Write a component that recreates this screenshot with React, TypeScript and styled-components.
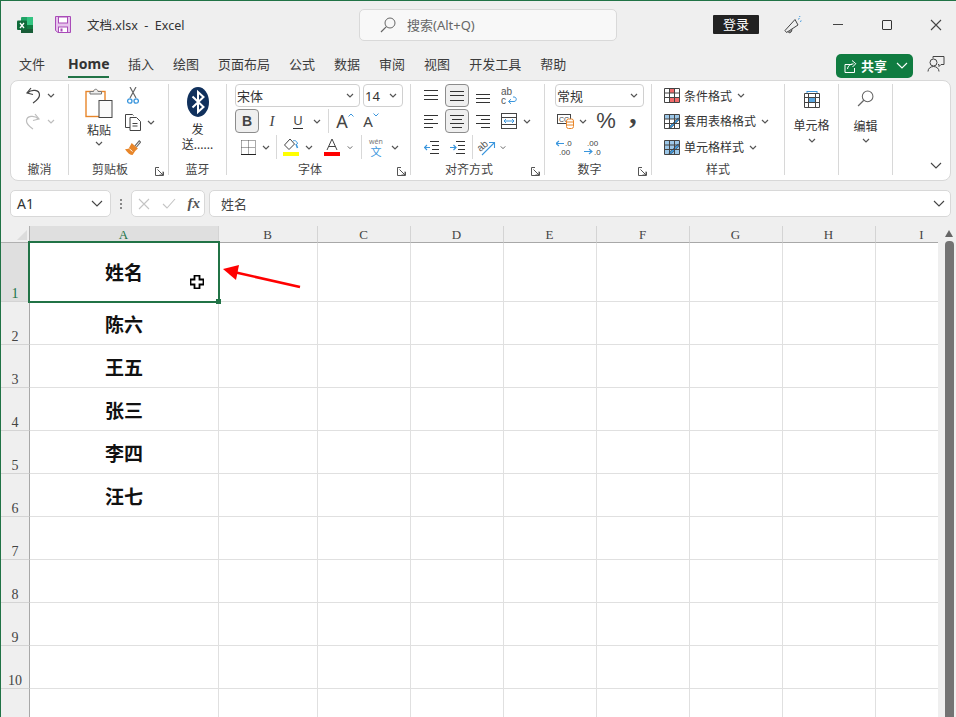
import React from 'react'
import styled, { createGlobalStyle } from 'styled-components'

const UI_FONT = `"Noto Sans", "Noto Sans CJK SC", sans-serif`
const GREEN = '#217346'
const BLUE = '#3a96dd'
const ORANGE = '#e8862a'
const INK = '#444'

const GlobalStyle = createGlobalStyle`
  html, body { margin: 0; padding: 0; background: #efefef; }
  #root { width: 956px; height: 717px; overflow: hidden; }
  * { box-sizing: border-box; }
`

// small drawings
const Chevron = ({ color = '#555' }: { color?: string }) => (
  <svg width="8" height="5" viewBox="0 0 8 5" fill="none" stroke={color} strokeWidth="1.2">
    <path d="M1 1l3 3 3-3" />
  </svg>
)

const WideChevron = ({ color = '#444' }: { color?: string }) => (
  <svg width="12" height="7" viewBox="0 0 12 7" fill="none" stroke={color} strokeWidth="1.1">
    <path d="M1 1l5 5 5-5" />
  </svg>
)

const Stroke = ({ w, h, children, color = INK }: { w: number; h: number; children: React.ReactNode; color?: string }) => (
  <svg width={w} height={h} viewBox={`0 0 ${w} ${h}`} fill="none" stroke={color} strokeWidth="1">
    {children}
  </svg>
)

const ExcelLogo = () => (
  <svg width="16" height="16" viewBox="0 0 16 16">
    <rect x="4" y="0" width="12" height="16" rx="1" fill="#21a366" />
    <rect x="10" y="0" width="6" height="8" fill="#33c481" />
    <rect x="4" y="8" width="12" height="4" fill="#107c41" />
    <rect x="4" y="12" width="12" height="4" fill="#185c37" />
    <rect x="0" y="3.5" width="10" height="9.5" rx="1" fill="#0f6b3a" />
    <path d="M3 6l4 5M7 6l-4 5" stroke="#fff" strokeWidth="1.3" />
  </svg>
)

const SaveIcon = () => (
  <svg width="16" height="17" viewBox="0 0 16 17">
    <path d="M.5.5h15v16H3l-2.5-2z" fill="#e6c3ec" stroke="#a94bb8" />
    <rect x="3.5" y="1" width="9" height="6" fill="#fff" stroke="#a94bb8" />
    <rect x="3.5" y="11" width="9" height="5.5" fill="#fff" stroke="#a94bb8" />
    <rect x="5.5" y="12.5" width="2" height="3" fill="#a94bb8" />
  </svg>
)

const SearchGlass = ({ size = 16, color = '#666' }: { size?: number; color?: string }) => (
  <svg width={size} height={size} viewBox="0 0 16 16" fill="none" stroke={color} strokeWidth="1">
    <circle cx="10" cy="6" r="5" />
    <path d="M6.4 9.6L1 15" strokeWidth="1.2" />
  </svg>
)

const Megaphone = () => (
  <svg width="18" height="18" viewBox="0 0 18 18" fill="none" stroke={INK}>
    <path d="M11 3.5l3 5.5-11.5 7.5-1.5-2z" />
    <path d="M4 15.5c.5 1.6 3 1.8 3.6-.5l.4-1.8" fill="#888" />
    <path d="M14.5 3.5l.8-1.5M16 5.5l1.5-.7M15.5 1l.5-1" stroke={BLUE} />
  </svg>
)

const ShareIcon = () => (
  <svg width="13" height="14" viewBox="0 0 13 14" fill="none" stroke="#fff">
    <path d="M8 5.5H1v8h9.5V9" />
    <path d="M3.5 10c.3-3 2.5-5 6-5.2M8 1.5l3.8 3.2L8.5 8" />
  </svg>
)

const CommentsIcon = () => (
  <svg width="18" height="18" viewBox="0 0 18 18" fill="none" stroke={INK}>
    <path d="M6 3.5V1.5h11v8h-3l-2 2v-2h-1" />
    <circle cx="6.5" cy="7.5" r="3.5" fill="#efefef" />
    <path d="M1 16.5c0-3 2.5-5 5.5-5s5.5 2 5.5 5" />
  </svg>
)

const CloseX = ({ color = '#444' }: { color?: string }) => (
  <svg width="12" height="12" viewBox="0 0 12 12" stroke={color} strokeWidth="1.1">
    <path d="M1 1l10 10M11 1L1 11" />
  </svg>
)

const Undo = ({ color = '#444', flip = false }: { color?: string; flip?: boolean }) => (
  <svg width="16" height="17" viewBox="0 0 16 17" fill="none" stroke={color} strokeWidth="1.2">
    <g transform={flip ? 'translate(16 0) scale(-1 1)' : undefined}>
      <path d="M6 1L2 6l6 1.5" />
      <path d="M2.5 6C6.500 2 14.500 2.500 14.500 8c0 3.500-3 5.500-6.500 8" />
    </g>
  </svg>
)

const PasteIcon = () => (
  <svg width="28" height="30" viewBox="0 0 28 30" fill="none">
    <rect x="1" y="3.500" width="19" height="25" fill="#fff" stroke={ORANGE} strokeWidth="1.4" />
    <path d="M5 6V3.500h3.500C9 .5 12.500.5 13 3.500h3.500V6z" fill="#eee" stroke="#777" />
    <rect x="14" y="12.500" width="13" height="17" fill="#fafafa" stroke="#444" />
  </svg>
)

const Scissors = () => (
  <svg width="12" height="18" viewBox="0 0 12 18" fill="none">
    <path d="M3 11L9 0M9 11L3 0" stroke="#666" strokeWidth="1.2" />
    <circle cx="2.800" cy="14" r="2.200" stroke={BLUE} strokeWidth="1.3" />
    <circle cx="9.200" cy="14" r="2.200" stroke={BLUE} strokeWidth="1.3" />
  </svg>
)

const CopyIcon = () => (
  <svg width="16" height="17" viewBox="0 0 16 17" fill="none" stroke="#444">
    <path d="M5 13.500H.5V.5h7l1 1" />
    <path d="M5 3.500h6.500l4 4v9H5z" fill="#fff" />
    <path d="M7.500 9.500h5M7.500 12h5" />
  </svg>
)

const Painter = () => (
  <svg width="18" height="17" viewBox="0 0 18 17" fill="none">
    <path d="M11 7l5-6 1.500 1.500-5 6" stroke="#666" strokeWidth="1.2" />
    <path d="M7.500 3.500l7 6-3 3-3 4.500C6 17 3 15 0 10.500l4-.5z" fill={ORANGE} />
    <path d="M5 10l3.500 3" stroke="#fff" />
  </svg>
)

const Bluetooth = () => (
  <svg width="22" height="30" viewBox="0 0 22 30">
    <ellipse cx="11" cy="15" rx="11" ry="15" fill="#10305c" />
    <path d="M5.500 9.500l11 10.500-5.500 5V5l5.500 5-11 10.500" fill="none" stroke="#fff" strokeWidth="2" />
  </svg>
)

const Launcher = () => (
  <svg width="9" height="9" viewBox="0 0 9 9" fill="none" stroke="#555">
    <path d="M4 .5H.5v8h8V5" />
    <path d="M2.500 2.500L8 8M8 4.500V8H4.500" />
  </svg>
)

const BorderIcon = () => (
  <svg width="15" height="15" viewBox="0 0 15 15" fill="none" stroke="#555" strokeDasharray="1 1">
    <path d="M.5.5h14M.5 7.500h14M.5.5v14M7.500.5v14M14.500.5v14" />
    <path d="M0 14.500h15" strokeDasharray="none" stroke="#222" />
  </svg>
)

const FillIcon = () => (
  <svg width="16" height="19" viewBox="0 0 16 19" fill="none">
    <path d="M7 1L1.500 7 6 11.500 11.500 6z" stroke="#444" />
    <path d="M13 6l1.500 4" stroke={BLUE} strokeWidth="1.6" />
    <path d="M10 3c2-1 4 0 4.500 3" stroke={BLUE} />
    <rect x="0" y="14" width="16" height="4" fill="#ffff00" />
  </svg>
)

const FontColor = () => (
  <svg width="16" height="19" viewBox="0 0 16 19" fill="none">
    <path d="M3 12L8 1l5 11M4.800 8.500h6.400" stroke="#444" />
    <rect x="0" y="14" width="16" height="4" fill="#f00" />
  </svg>
)

const Lines = ({ rows }: { rows: [number, number, number][] }) => (
  <Stroke w={16} h={20} color="#333">
    {rows.map(([x1, x2, y]) => (
      <path key={`${x1}-${y}`} d={`M${x1} ${y}.5H${x2}`} />
    ))}
  </Stroke>
)

const WrapIcon = () => (
  <svg width="16" height="18" viewBox="0 0 16 18" fill="none">
    <text fontSize="10" fontFamily="Liberation Sans" fill="#555">
      <tspan x="0" y="8">ab</tspan>
      <tspan x="0" y="17">c</tspan>
    </text>
    <path d="M8 14.500h5c3 0 3-4.500 0-4.500h-1M10 12.200l-2.500 2.300 2.500 2.300" stroke={BLUE} />
  </svg>
)

const MergeIcon = () => (
  <svg width="16" height="16" viewBox="0 0 16 16" fill="none">
    <rect x=".5" y=".5" width="15" height="15" stroke="#444" />
    <path d="M.5 4.500h15M.5 11.500h15" stroke="#444" />
    <rect x="1" y="5" width="14" height="6" fill="#fff" />
    <path d="M3 8h10M5 6L3 8l2 2M11 6l2 2-2 2" stroke={BLUE} />
  </svg>
)

const IndentIcon = ({ out }: { out?: boolean }) => (
  <svg width="15" height="13" viewBox="0 0 15 13" fill="none">
    <path d="M6 .5h9M8 4.500h7M8 8.500h7M6 12.500h9" stroke="#333" />
    <path d={out ? 'M0 6.500h6M3 4L.5 6.500 3 9' : 'M0 6.500h6M3.500 4L6 6.500 3.500 9'} stroke={BLUE} strokeWidth="1.2" />
  </svg>
)

const OrientIcon = () => (
  <svg width="18" height="18" viewBox="0 0 18 18" fill="none" overflow="visible">
    <text x="0" y="12" fontSize="10" fontFamily="Liberation Sans" fill="#555" transform="rotate(-40 4 10)">ab</text>
    <path d="M4 17L16 5M11 4.500h5.500V10" stroke={BLUE} strokeWidth="1.1" />
  </svg>
)

const AccountingIcon = () => (
  <svg width="17" height="16" viewBox="0 0 17 16" fill="none">
    <rect x=".5" y="1.500" width="13" height="9" stroke="#444" />
    <text x="2" y="9" fontSize="7" fontFamily="Liberation Sans" fill="#444">CC</text>
    <rect x="9.500" y="6" width="7" height="9.500" rx="2" fill="#fff" stroke={ORANGE} />
    <path d="M9.500 9h7M9.500 12h7" stroke={ORANGE} />
  </svg>
)

const DecimalIcon = ({ more }: { more?: boolean }) => (
  <svg width="18" height="17" viewBox="0 0 18 17" fill="none">
    <path d={more ? 'M0 12.500h8M5 10l3 2.500L5 15' : 'M0 4.500h8M3 2L0 4.500 3 7'} stroke={BLUE} strokeWidth="1.1" />
    <text fontSize="8" fontFamily="Liberation Sans" fill="#444">
      <tspan x={more ? 3 : 9} y="7">{more ? '.00' : '.0'}</tspan>
      <tspan x={more ? 10 : 3} y="16">{more ? '.0' : '.00'}</tspan>
    </text>
  </svg>
)

const TableBase = ({ children }: { children?: React.ReactNode }) => (
  <svg width="16" height="15" viewBox="0 0 16 15" fill="none">
    {children}
    <path d="M.5.5h15v14H.5zM.5 5h15M.5 9.500h15M5.500.5v14M10.500.5v14" stroke="#444" />
  </svg>
)

const Brush = () => <path d="M16 5L8 13c-1 1-2 1.500-3.500 1.500L6 12l8-8z" fill={BLUE} stroke="#444" strokeWidth=".6" />

const CellsIcon = () => (
  <svg width="16" height="17" viewBox="0 0 16 17" fill="none">
    <path d="M3 .5h10M3 0v2M13 0v2" stroke={BLUE} />
    <rect x="4" y="6" width="8" height="5.500" fill="#5ba7e0" />
    <path d="M.5 2.500h15v14H.5zM.5 6.500h15M.5 11.500h15M4.500 2.500v14M11.500 2.500v14" stroke="#444" />
  </svg>
)

const PointerCross = () => (
  <svg width="14" height="14" viewBox="0 0 14 14">
    <path d="M4.500.5h5v4h4v5h-4v4h-5v-4h-4v-5h4z" fill="#fff" stroke="#000" strokeWidth="1.8" />
  </svg>
)

const RedArrow = () => (
  <svg width="84" height="30" viewBox="0 0 84 30">
    <path d="M78 22L14 7.500" stroke="#f00" strokeWidth="2.600" />
    <path d="M1 4L17 0l-3 15z" fill="#f00" />
  </svg>
)

// shell
const Window = styled.div`
  position: relative;
  width: 956px;
  height: 717px;
  overflow: hidden;
  background: #efefef;
  border-top: 1px solid ${GREEN};
  border-left: 1px solid ${GREEN};
  font-family: ${UI_FONT};
  color: #333;
`

const TitleBar = styled.header`
  display: flex;
  align-items: center;
  height: 47px;
`

const TitleLeft = styled.div`
  display: flex;
  align-items: center;
  width: 358px;
  padding-left: 16px;
  gap: 22px;
`

const DocName = styled.span`
  font-size: 12.500px;
  margin-left: -6px;
  white-space: pre;
`

const SearchBox = styled.div`
  display: flex;
  align-items: center;
  width: 258px;
  height: 32px;
  padding-left: 20px;
  gap: 11px;
  background: #f8f8f8;
  border: 1px solid #d9d9d9;
  border-radius: 5px;
  font-size: 13px;
  color: #666;
`

const LoginButton = styled.div`
  width: 46px;
  height: 19px;
  margin-left: 96px;
  background: #222;
  color: #fff;
  font-size: 13px;
  line-height: 19px;
  text-align: center;
  border-radius: 1px;
`

const TitleAction = styled.div<{ $w: number }>`
  display: flex;
  align-items: center;
  justify-content: center;
  width: ${p => p.$w}px;
  height: 30px;
`

const MinLine = styled.span`
  width: 10px;
  height: 1px;
  background: #444;
`

const MaxBox = styled.span`
  width: 10px;
  height: 10px;
  border: 1px solid #333;
  border-radius: 1px;
`

const TabBar = styled.nav`
  display: flex;
  align-items: center;
  height: 32px;
  padding-left: 18px;
  gap: 19px;
`

const Tab = styled.span<{ $active?: boolean }>`
  position: relative;
  font-size: ${p => (p.$active ? '14px' : '13px')};
  font-weight: ${p => (p.$active ? 700 : 400)};
  margin-left: ${p => (p.$active ? '4px' : '0')};
  line-height: 22px;
  width: ${p => (p.$active ? '41px' : 'auto')};
  text-align: center;
  color: ${p => (p.$active ? '#333' : '#3c3c3c')};
  border-bottom: 2px solid ${p => (p.$active ? GREEN : 'transparent')};
  padding-bottom: 1px;
  margin-top: 3px;
`

const TabSpacer = styled.div`
  flex: 1;
`

const ShareButton = styled.div`
  display: flex;
  align-items: center;
  width: 77px;
  height: 24px;
  margin-top: 3px;
  margin-right: 43px;
  padding: 0 5px 0 8px;
  gap: 4px;
  background: #107c41;
  border-radius: 5px;
  color: #fff;
  font-size: 13px;
  font-weight: 700;

  svg:last-child {
    margin-left: auto;
  }
`

const TabComments = styled.div`
  position: absolute;
  top: 54px;
  left: 926px;
`

// ribbon
const Ribbon = styled.section`
  display: flex;
  width: 941px;
  height: 101px;
  margin-left: 9px;
  padding-top: 3px;
  background: #fff;
  border: 1px solid #d8d8d8;
  border-radius: 8px;
`

const Group = styled.div<{ $w: number }>`
  display: flex;
  flex-direction: column;
  flex: none;
  width: ${p => p.$w}px;
  height: 91px;
  border-right: 1px solid #d8d8d8;
`

const GroupBody = styled.div<{ $pad?: number }>`
  flex: 1;
  display: flex;
  flex-direction: column;
  gap: 2px;
  padding-left: ${p => p.$pad ?? 0}px;
`

const GroupFoot = styled.div`
  display: flex;
  align-items: flex-start;
  height: 14px;
  padding-top: 2px;
`

const GroupLabel = styled.span`
  flex: 1;
  font-size: 12px;
  line-height: 14px;
  text-align: center;
  color: #444;
`

const LauncherSlot = styled.span`
  display: flex;
  justify-content: center;
  width: 17px;
  margin-top: 4px;
`

const Row = styled.div<{ $first?: boolean; $gap?: number }>`
  display: flex;
  align-items: center;
  height: ${p => (p.$first ? 23 : 24)}px;
  gap: ${p => p.$gap ?? 0}px;
`

const Slot = styled.div<{ $w: number; $on?: boolean }>`
  display: flex;
  align-items: center;
  justify-content: center;
  flex: none;
  width: ${p => p.$w}px;
  height: ${p => (p.$on ? '100%' : 'auto')};
  background: ${p => (p.$on ? '#efefef' : 'transparent')};
  border: ${p => (p.$on ? '1px solid #8c8c8c' : '0')};
  border-radius: 4px;
`

const RowSep = styled.i<{ $w: number }>`
  display: block;
  flex: none;
  width: ${p => p.$w}px;
  height: 24px;
  background: linear-gradient(#d8d8d8, #d8d8d8) center / 1px 100% no-repeat;
`

const Combo = styled.div<{ $w: number; $ml?: number }>`
  display: flex;
  align-items: center;
  justify-content: space-between;
  flex: none;
  width: ${p => p.$w}px;
  height: 23px;
  margin-left: ${p => p.$ml ?? 0}px;
  padding: 0 5px 0 1px;
  border: 1px solid #d0d0d0;
  border-radius: 4px;
  font-size: 13px;
  color: #333;
`

const BoldB = styled.span`
  font-family: "Liberation Sans", sans-serif;
  font-size: 14px;
  font-weight: 700;
  color: #444;
`

const ItalicI = styled.span`
  font-family: "Liberation Serif", serif;
  font-size: 15px;
  font-style: italic;
  color: #444;
`

const UnderU = styled.span`
  font-size: 13px;
  line-height: 15px;
  border-bottom: 1px solid #333;
  color: #444;
`

const GrowA = styled.span<{ $size: number }>`
  position: relative;
  font-size: ${p => p.$size}px;
  line-height: 18px;
  color: #444;

  svg {
    position: absolute;
    top: 1px;
    left: 100%;
  }
`

const Phonetic = styled.ruby`
  font-size: 11px;
  line-height: 1;
  color: ${BLUE};

  rt {
    font-size: 7px;
    line-height: 7px;
    color: #777;
  }
`

const Percent = styled.span`
  font-family: "Liberation Sans", sans-serif;
  font-size: 22px;
  color: #444;
`

const Comma = styled.span`
  font-family: "Liberation Serif", serif;
  font-size: 30px;
  font-weight: 700;
  line-height: 8px;
  height: 24px;
  color: #444;
`

const ClipColumns = styled.div`
  display: flex;
  padding-left: 4px;
`

const BigButton = styled.div<{ $w?: number; $top?: number }>`
  display: flex;
  flex-direction: column;
  align-items: center;
  flex: none;
  width: ${p => (p.$w ? `${p.$w}px` : '100%')};
  padding-top: ${p => p.$top ?? 4}px;
  font-size: 12px;
  line-height: 15px;
  color: #333;
`

const BigText = styled.span<{ $mt?: number }>`
  margin-top: ${p => p.$mt ?? 4}px;
  text-align: center;
`

const BigChevron = styled.span<{ $mt: number }>`
  display: flex;
  margin-top: ${p => p.$mt}px;
`

const ClipTools = styled.div`
  display: flex;
  flex-direction: column;
  gap: 5px;
  padding-top: 3px;
`

const StyleRow = styled(Row)`
  gap: 2px;
`

const StyleText = styled.span`
  font-size: 12px;
  color: #333;
  margin-right: 3px;
`

const CollapseCell = styled.div`
  display: flex;
  flex: 1;
  align-items: flex-end;
  justify-content: flex-end;
  height: 91px;
  padding: 0 8px 6px 0;
`

// formula bar
const FormulaBar = styled.div`
  display: flex;
  align-items: stretch;
  height: 27px;
  margin: 9px 5px 9px 9px;
`

const inputBox = `
  display: flex;
  align-items: center;
  background: #fff;
  border: 1px solid #d8d8d8;
  border-radius: 5px;
`

const NameBox = styled.div`
  ${inputBox}
  justify-content: space-between;
  width: 101px;
  padding: 0 7px 0 6px;
  font-size: 14px;
`

const GripDots = styled.div`
  display: flex;
  flex-direction: column;
  justify-content: center;
  gap: 2px;
  width: 20px;
  align-items: center;
`

const GripDot = styled.i`
  width: 2px;
  height: 2px;
  background: #888;
`

const FxBox = styled.div`
  ${inputBox}
  justify-content: space-between;
  width: 74px;
  padding: 0 4px 0 6px;
`

const FxText = styled.span`
  font-family: "Liberation Serif", serif;
  font-style: italic;
  font-weight: 700;
  font-size: 15px;
  color: #555;
`

const FormulaInput = styled.div`
  ${inputBox}
  justify-content: space-between;
  flex: 1;
  margin-left: 4px;
  padding: 0 5px 0 11px;
  font-size: 13px;
  color: #444;
`

// sheet
const Sheet = styled.div`
  position: relative;
  display: flex;
`

const SheetGrid = styled.div`
  display: grid;
  grid-template-columns: 29px 189px 99px repeat(7, 93px);
  grid-template-rows: 17px 59px repeat(11, 43px);
  width: 937px;
  overflow: hidden;
`

const Corner = styled.div`
  position: relative;
  border-right: 1px solid #b0b0b0;
  border-bottom: 1px solid #b0b0b0;

  &::after {
    content: '';
    position: absolute;
    right: 2px;
    bottom: 2px;
    border-style: solid;
    border-width: 0 0 10px 10px;
    border-color: transparent transparent #dcdcdc transparent;
  }
`

const ColHead = styled.div<{ $on?: boolean }>`
  font-family: "Liberation Serif", serif;
  font-size: 13px;
  line-height: 18px;
  text-align: center;
  padding-right: 1px;
  color: ${p => (p.$on ? GREEN : '#444')};
  background: ${p => (p.$on ? '#dfdfdf' : '#efefef')};
  border-right: 1px solid #d4d4d4;
  border-bottom: 1px solid #a8a8a8;
`

const RowHead = styled.div<{ $on?: boolean }>`
  display: flex;
  align-items: flex-end;
  justify-content: center;
  font-family: "Liberation Serif", serif;
  font-size: 14px;
  line-height: 14px;
  color: ${p => (p.$on ? GREEN : '#444')};
  background: ${p => (p.$on ? '#dfdfdf' : '#efefef')};
  border-right: 1px solid #a8a8a8;
  border-bottom: 1px solid #d4d4d4;
`

const Cell = styled.div<{ $on?: boolean }>`
  position: relative;
  z-index: ${p => (p.$on ? 2 : 'auto')};
  display: flex;
  align-items: center;
  justify-content: center;
  padding-top: ${p => (p.$on ? '0' : '1px')};
  background: #fff;
  border-right: 1px solid #e0e0e0;
  border-bottom: 1px solid #e0e0e0;
  font-size: 19px;
  font-weight: 700;
  color: #111;
`

const Selection = styled.div`
  position: absolute;
  top: -2px;
  left: -2px;
  right: -2px;
  bottom: -2px;
  border: 2px solid ${GREEN};
  pointer-events: none;
`

const FillHandle = styled.i`
  position: absolute;
  right: -3px;
  bottom: -3px;
  width: 5px;
  height: 5px;
  background: ${GREEN};
`

const CellCursor = styled.div`
  position: absolute;
  left: 160px;
  top: 32px;
  display: flex;
`

const ArrowOverlay = styled.div`
  position: absolute;
  left: 221px;
  top: 39px;
  display: flex;
`

const ScrollTrack = styled.div`
  display: flex;
  flex-direction: column;
  align-items: center;
  flex: 1;
  padding: 4px 1px 0 5px;
  gap: 4px;
`

const ScrollUp = styled.i`
  width: 0;
  height: 0;
  border-style: solid;
  border-width: 0 4.500px 7px;
  border-color: transparent transparent #666 transparent;
`

const ScrollThumb = styled.div`
  width: 9px;
  height: 520px;
  background: #737373;
  border-radius: 4px;
`

const columns = ['A', 'B', 'C', 'D', 'E', 'F', 'G', 'H', 'I']
const names = ['姓名', '陈六', '王五', '张三', '李四', '汪七']
const tabs = ['插入', '绘图', '页面布局', '公式', '数据', '审阅', '视图', '开发工具', '帮助']

const topAlign: [number, number, number][] = [[1, 15, 4], [1, 15, 9], [1, 15, 13]]
const midAlign: [number, number, number][] = [[1, 15, 5], [1, 15, 9], [1, 15, 14]]
const botAlign: [number, number, number][] = [[1, 15, 8], [1, 15, 12], [1, 15, 16]]
const leftAlign: [number, number, number][] = [[1, 15, 4], [1, 10, 8], [1, 15, 12], [1, 10, 16]]
const centerAlign: [number, number, number][] = [[1, 15, 4], [3, 13, 8], [1, 15, 12], [3, 13, 16]]
const rightAlign: [number, number, number][] = [[1, 15, 4], [6, 15, 8], [1, 15, 12], [6, 15, 16]]

const UndoGroup = () => (
  <Group $w={58}>
    <GroupBody $pad={10}>
      <Row $first>
        <Slot $w={24}><Undo /></Slot>
        <Slot $w={12}><Chevron /></Slot>
      </Row>
      <Row>
        <Slot $w={24}><Undo color="#bdbdbd" flip /></Slot>
        <Slot $w={12}><Chevron color="#bdbdbd" /></Slot>
      </Row>
    </GroupBody>
    <GroupFoot><GroupLabel>撤消</GroupLabel></GroupFoot>
  </Group>
)

const ClipboardGroup = () => (
  <Group $w={100}>
    <GroupBody>
      <ClipColumns>
        <BigButton $w={52}>
          <PasteIcon />
          <BigText $mt={5}>粘贴</BigText>
          <BigChevron $mt={3}><Chevron /></BigChevron>
        </BigButton>
        <ClipTools>
          <Slot $w={16}><Scissors /></Slot>
          <Row>
            <Slot $w={16}><CopyIcon /></Slot>
            <Slot $w={20}><Chevron /></Slot>
          </Row>
          <Slot $w={16}><Painter /></Slot>
        </ClipTools>
      </ClipColumns>
    </GroupBody>
    <GroupFoot>
      <GroupLabel>剪贴板</GroupLabel>
      <LauncherSlot><Launcher /></LauncherSlot>
    </GroupFoot>
  </Group>
)

const BluetoothGroup = () => (
  <Group $w={58}>
    <GroupBody>
      <BigButton $top={3}>
        <Bluetooth />
        <BigText $mt={5}>发<br />送......</BigText>
      </BigButton>
    </GroupBody>
    <GroupFoot><GroupLabel>蓝牙</GroupLabel></GroupFoot>
  </Group>
)

const FontGroup = () => (
  <Group $w={184}>
    <GroupBody $pad={8}>
      <Row $first>
        <Combo $w={125}>宋体<Chevron /></Combo>
        <Combo $w={40} $ml={3}>14<Chevron /></Combo>
      </Row>
      <Row>
        <Slot $w={24} $on><BoldB>B</BoldB></Slot>
        <Slot $w={26}><ItalicI>I</ItalicI></Slot>
        <Slot $w={26}><UnderU>U</UnderU></Slot>
        <Slot $w={12}><Chevron /></Slot>
        <RowSep $w={10} />
        <Slot $w={18}>
          <GrowA $size={18}>A<svg width="6" height="4" viewBox="0 0 6 4" fill="none" stroke={BLUE}><path d="M.5 3.500L3 1l2.500 2.500" /></svg></GrowA>
        </Slot>
        <Slot $w={34}>
          <GrowA $size={15}>A<svg width="6" height="4" viewBox="0 0 6 4" fill="none" stroke={BLUE}><path d="M.5.5L3 3 5.500.5" /></svg></GrowA>
        </Slot>
      </Row>
      <Row>
        <Slot $w={26}><BorderIcon /></Slot>
        <Slot $w={10}><Chevron /></Slot>
        <RowSep $w={10} />
        <Slot $w={20}><FillIcon /></Slot>
        <Slot $w={16}><Chevron /></Slot>
        <Slot $w={30}><FontColor /></Slot>
        <Slot $w={6}><Chevron /></Slot>
        <RowSep $w={16} />
        <Slot $w={14}>
          <Phonetic>文<rt>wén</rt></Phonetic>
        </Slot>
        <Slot $w={24}><Chevron /></Slot>
      </Row>
    </GroupBody>
    <GroupFoot>
      <GroupLabel>字体</GroupLabel>
      <LauncherSlot><Launcher /></LauncherSlot>
    </GroupFoot>
  </Group>
)

const AlignGroup = () => (
  <Group $w={134}>
    <GroupBody $pad={8}>
      <Row $first $gap={2}>
        <Slot $w={24}><Lines rows={topAlign} /></Slot>
        <Slot $w={24} $on><Lines rows={midAlign} /></Slot>
        <Slot $w={24}><Lines rows={botAlign} /></Slot>
        <Slot $w={24}><WrapIcon /></Slot>
      </Row>
      <Row $gap={2}>
        <Slot $w={24}><Lines rows={leftAlign} /></Slot>
        <Slot $w={24} $on><Lines rows={centerAlign} /></Slot>
        <Slot $w={24}><Lines rows={rightAlign} /></Slot>
        <Slot $w={24}><MergeIcon /></Slot>
        <Slot $w={8}><Chevron /></Slot>
      </Row>
      <Row $gap={2}>
        <Slot $w={24}><IndentIcon out /></Slot>
        <Slot $w={24}><IndentIcon /></Slot>
        <RowSep $w={3} />
        <Slot $w={22}><OrientIcon /></Slot>
        <Slot $w={6}><Chevron /></Slot>
      </Row>
    </GroupBody>
    <GroupFoot>
      <GroupLabel>对齐方式</GroupLabel>
      <LauncherSlot><Launcher /></LauncherSlot>
    </GroupFoot>
  </Group>
)

const NumberGroup = () => (
  <Group $w={107}>
    <GroupBody $pad={10}>
      <Row $first>
        <Combo $w={89}>常规<Chevron /></Combo>
      </Row>
      <Row>
        <Slot $w={20}><AccountingIcon /></Slot>
        <Slot $w={16}><Chevron /></Slot>
        <Slot $w={30}><Percent>%</Percent></Slot>
        <Slot $w={24}><Comma>,</Comma></Slot>
      </Row>
      <Row>
        <Slot $w={20}><DecimalIcon /></Slot>
        <Slot $w={36}><DecimalIcon more /></Slot>
      </Row>
    </GroupBody>
    <GroupFoot>
      <GroupLabel>数字</GroupLabel>
      <LauncherSlot><Launcher /></LauncherSlot>
    </GroupFoot>
  </Group>
)

const StylesGroup = () => (
  <Group $w={133}>
    <GroupBody $pad={10}>
      <StyleRow $first>
        <Slot $w={20}>
          <TableBase>
            <rect x="5" y="1" width="5" height="4" fill="#f26b6b" />
            <rect x="5" y="10" width="10" height="4" fill="#f26b6b" />
          </TableBase>
        </Slot>
        <StyleText>条件格式</StyleText>
        <Chevron />
      </StyleRow>
      <StyleRow>
        <Slot $w={20}>
          <TableBase><rect x="1" y="1" width="14" height="4" fill="#9cc7e8" /><Brush /></TableBase>
        </Slot>
        <StyleText>套用表格格式</StyleText>
        <Chevron />
      </StyleRow>
      <StyleRow>
        <Slot $w={20}>
          <TableBase><rect x="1" y="1" width="14" height="13" fill="#9cc7e8" /><Brush /></TableBase>
        </Slot>
        <StyleText>单元格样式</StyleText>
        <Chevron />
      </StyleRow>
    </GroupBody>
    <GroupFoot><GroupLabel>样式</GroupLabel></GroupFoot>
  </Group>
)

const CellsGroup = () => (
  <Group $w={54}>
    <GroupBody>
      <BigButton $top={7}>
        <CellsIcon />
        <BigText $mt={10}>单元格</BigText>
        <BigChevron $mt={5}><Chevron /></BigChevron>
      </BigButton>
    </GroupBody>
  </Group>
)

const EditGroup = () => (
  <Group $w={54}>
    <GroupBody>
      <BigButton $top={6}>
        <SearchGlass size={17} />
        <BigText $mt={12}>编辑</BigText>
        <BigChevron $mt={4}><Chevron /></BigChevron>
      </BigButton>
    </GroupBody>
  </Group>
)

const App = () => (
  <Window>
    <GlobalStyle />
    <TitleBar>
      <TitleLeft>
        <ExcelLogo />
        <SaveIcon />
        <DocName>{'文档.xlsx  -  Excel'}</DocName>
      </TitleLeft>
      <SearchBox>
        <SearchGlass />
        搜索(Alt+Q)
      </SearchBox>
      <LoginButton>登录</LoginButton>
      <TitleAction $w={68}><Megaphone /></TitleAction>
      <TitleAction $w={22}><MinLine /></TitleAction>
      <TitleAction $w={76}><MaxBox /></TitleAction>
      <TitleAction $w={22}><CloseX /></TitleAction>
    </TitleBar>

    <TabBar>
      <Tab>文件</Tab>
      <Tab $active>Home</Tab>
      {tabs.map(t => <Tab key={t}>{t}</Tab>)}
      <TabSpacer />
      <ShareButton>
        <ShareIcon />
        共享
        <WideChevron color="#fff" />
      </ShareButton>
      <TabComments><CommentsIcon /></TabComments>
    </TabBar>

    <Ribbon>
      <UndoGroup />
      <ClipboardGroup />
      <BluetoothGroup />
      <FontGroup />
      <AlignGroup />
      <NumberGroup />
      <StylesGroup />
      <CellsGroup />
      <EditGroup />
      <CollapseCell><WideChevron /></CollapseCell>
    </Ribbon>

    <FormulaBar>
      <NameBox>A1<WideChevron /></NameBox>
      <GripDots><GripDot /><GripDot /><GripDot /></GripDots>
      <FxBox>
        <CloseX color="#c4c4c4" />
        <svg width="14" height="11" viewBox="0 0 14 11" fill="none" stroke="#c4c4c4" strokeWidth="1.1"><path d="M1 6l4 4 8-9" /></svg>
        <FxText>fx</FxText>
      </FxBox>
      <FormulaInput>姓名<WideChevron /></FormulaInput>
    </FormulaBar>

    <Sheet>
      <SheetGrid>
        <Corner />
        {columns.map(c => <ColHead key={c} $on={c === 'A'}>{c}</ColHead>)}
        {Array.from({ length: 11 }, (_, r) => (
          <React.Fragment key={r}>
            <RowHead $on={r === 0}>{r < 10 ? r + 1 : null}</RowHead>
            {columns.map((c, i) => (
              <Cell key={c} $on={r === 0 && i === 0}>
                {i === 0 ? names[r] : null}
                {r === 0 && i === 0 && (
                  <>
                    <Selection><FillHandle /></Selection>
                    <CellCursor><PointerCross /></CellCursor>
                  </>
                )}
              </Cell>
            ))}
          </React.Fragment>
        ))}
      </SheetGrid>
      <ScrollTrack>
        <ScrollUp />
        <ScrollThumb />
      </ScrollTrack>
      <ArrowOverlay><RedArrow /></ArrowOverlay>
    </Sheet>
  </Window>
)

export default App
